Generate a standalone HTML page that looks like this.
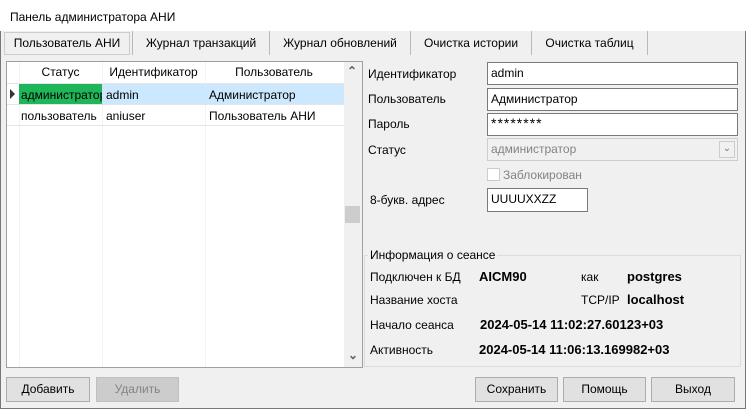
<!DOCTYPE html>
<html><head><meta charset="utf-8"><style>
*{margin:0;padding:0;box-sizing:border-box}
body{width:746px;height:409px;background:#f0f0f0;font-family:"Liberation Sans","Noto Sans CJK SC",sans-serif;font-size:12px;color:#000;position:relative;overflow:hidden}
.a{position:absolute;white-space:nowrap}
.win{position:absolute;left:0;top:0;width:746px;height:409px;border:1px solid #777;border-top:none}
.title{left:0;top:0;width:746px;height:31px;background:#fff}
.tab{top:31px;height:24px;line-height:24px;text-align:center;border-right:1px solid #b9b9b9}
.inp{background:#fff;border:1px solid #7a7a7a;height:23px;line-height:21px;padding-left:3px}
.btn{height:25px;line-height:23px;text-align:center;background:#e1e1e1;border:1px solid #adadad}
.b{font-weight:bold;font-size:13px}
</style></head><body>
<div class="win"></div>
<div class="a title"></div>
<div class="a" style="left:10px;top:10px;font-size:12px">Панель администратора АНИ</div>
<div class="a" style="left:4px;top:32px;width:126px;height:23px;border:1px solid #ccc;background:#f0f0f0;line-height:21px;text-align:center">Пользователь АНИ</div>
<div class="a tab" style="left:132px;width:138px;border-left:1px solid #b9b9b9">Журнал транзакций</div>
<div class="a tab" style="left:270px;width:141px">Журнал обновлений</div>
<div class="a tab" style="left:411px;width:121px">Очистка истории</div>
<div class="a tab" style="left:532px;width:116px">Очистка таблиц</div>

<!-- grid -->
<div class="a" style="left:6px;top:61px;width:357px;height:307px;background:#fff;border:1px solid #a0a0a0"></div>
<div class="a" style="left:7px;top:62px;width:337px;height:22px;border-bottom:1px solid #e5e5e5"></div>
<div class="a" style="left:19px;top:62px;width:1px;height:305px;background:#f3f3f3"></div>
<div class="a" style="left:102px;top:62px;width:1px;height:305px;background:#f3f3f3"></div>
<div class="a" style="left:205px;top:62px;width:1px;height:305px;background:#f3f3f3"></div>
<div class="a" style="left:19px;top:65px;width:83px;text-align:center">Статус</div>
<div class="a" style="left:102px;top:65px;width:103px;text-align:center">Идентификатор</div>
<div class="a" style="left:205px;top:65px;width:138px;text-align:center">Пользователь</div>
<div class="a" style="left:19px;top:84px;width:325px;height:20px;background:#cce8ff"></div>
<div class="a" style="left:19px;top:84px;width:83px;height:20px;background:#1fb65a"></div>
<div class="a" style="left:7px;top:104px;width:337px;height:1px;background:#e5e5e5"></div>
<div class="a" style="left:7px;top:125px;width:337px;height:1px;background:#e5e5e5"></div>
<div class="a" style="left:10px;top:89px;width:0;height:0;border-left:5px solid #333;border-top:5px solid transparent;border-bottom:5px solid transparent"></div>
<div class="a" style="left:21px;top:88px;width:81px;overflow:hidden">администратор</div>
<div class="a" style="left:106px;top:88px">admin</div>
<div class="a" style="left:209px;top:88px">Администратор</div>
<div class="a" style="left:21px;top:109px;width:81px;overflow:hidden">пользователь</div>
<div class="a" style="left:106px;top:109px">aniuser</div>
<div class="a" style="left:209px;top:109px">Пользователь АНИ</div>
<div class="a" style="left:344px;top:62px;width:18px;height:305px;background:#f0f0f0"></div>
<div class="a" style="left:345px;top:206px;width:15px;height:17px;background:#cdcdcd"></div>
<div class="a" style="left:347px;top:64px;font-size:12px;color:#606060;font-weight:bold">&#8963;</div>
<div class="a" style="left:348px;top:348px;font-size:12px;color:#606060;font-weight:bold">&#8964;</div>

<!-- form -->
<div class="a" style="left:368px;top:67px">Идентификатор</div>
<div class="a" style="left:368px;top:92px">Пользователь</div>
<div class="a" style="left:368px;top:117px">Пароль</div>
<div class="a" style="left:368px;top:143px">Статус</div>
<div class="a inp" style="left:487px;top:62px;width:251px">admin</div>
<div class="a inp" style="left:487px;top:88px;width:251px">Администратор</div>
<div class="a inp" style="left:487px;top:113px;width:251px;line-height:18px;font-size:14px;letter-spacing:1px">********</div>
<div class="a inp" style="left:487px;top:138px;width:251px;border-color:#ccc;color:#838383;background:#f0f0f0">администратор</div>
<div class="a" style="left:719px;top:141px;width:16px;height:17px;border:1px solid #ccc;background:#f0f0f0;text-align:center;line-height:14px;font-size:10px;color:#777">&#8964;</div>
<div class="a" style="left:487px;top:168px;width:13px;height:13px;border:1px solid #ccc;background:#fff"></div>
<div class="a" style="left:503px;top:168px;color:#838383">Заблокирован</div>
<div class="a" style="left:370px;top:193px">8-букв. адрес</div>
<div class="a inp" style="left:487px;top:188px;width:101px;height:24px">UUUUXXZZ</div>

<!-- group -->
<div class="a" style="left:364px;top:255px;width:377px;height:112px;border:1px solid #dcdcdc"></div>
<div class="a" style="left:368px;top:248px;background:#f0f0f0;padding:0 2px">Информация о сеансе</div>
<div class="a" style="left:370px;top:270px">Подключен к БД</div>
<div class="a b" style="left:479px;top:269px">AICM90</div>
<div class="a" style="left:581px;top:270px">как</div>
<div class="a b" style="left:627px;top:269px">postgres</div>
<div class="a" style="left:370px;top:293px">Название хоста</div>
<div class="a" style="left:581px;top:293px">TCP/IP</div>
<div class="a b" style="left:627px;top:292px">localhost</div>
<div class="a" style="left:370px;top:318px">Начало сеанса</div>
<div class="a b" style="left:480px;top:317px">2024-05-14 11:02:27.60123+03</div>
<div class="a" style="left:370px;top:343px">Активность</div>
<div class="a b" style="left:479px;top:342px">2024-05-14 11:06:13.169982+03</div>

<!-- buttons -->
<div class="a btn" style="left:6px;top:377px;width:84px">Добавить</div>
<div class="a btn" style="left:96px;top:377px;width:83px;background:#ccc;border-color:#bfbfbf;color:#838383">Удалить</div>
<div class="a btn" style="left:475px;top:377px;width:83px">Сохранить</div>
<div class="a btn" style="left:563px;top:377px;width:83px">Помощь</div>
<div class="a btn" style="left:651px;top:377px;width:84px">Выход</div>
</body></html>
